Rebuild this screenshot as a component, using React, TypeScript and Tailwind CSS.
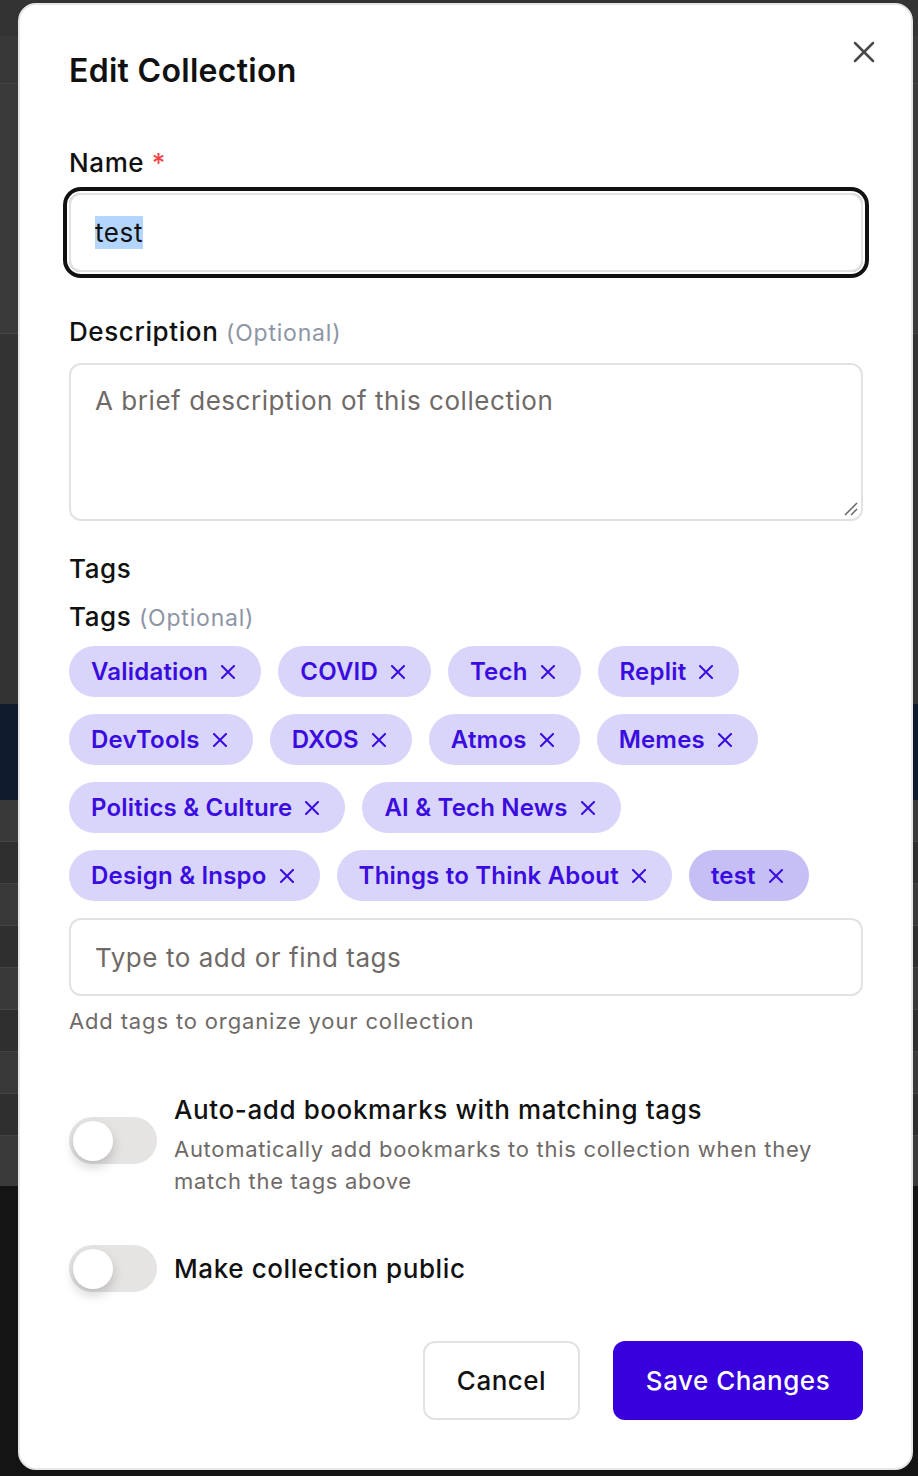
import { X } from 'lucide-react';

const tags = [
  'Validation',
  'COVID',
  'Tech',
  'Replit',
  'DevTools',
  'DXOS',
  'Atmos',
  'Memes',
  'Politics & Culture',
  'AI & Tech News',
  'Design & Inspo',
  'Things to Think About',
  'test',
];

function ChipX() {
  return (
    <svg width="14" height="14" viewBox="0 0 14 14" className="shrink-0">
      <path d="M1 1L13 13M13 1L1 13" stroke="currentColor" strokeWidth="2" strokeLinecap="square" />
    </svg>
  );
}

function Toggle() {
  return (
    <div className="w-[88px] h-[47px] rounded-full bg-[#e6e3e3] flex items-center px-[4px] shrink-0">
      <div className="w-[40px] h-[40px] rounded-full bg-white shadow-[0_6px_12px_rgba(0,0,0,0.18)]" />
    </div>
  );
}

export default function App() {
  return (
    <div className="relative w-[918px] h-[1476px] overflow-hidden bg-[#2c2c2c]" style={{ fontFamily: 'Inter, "Noto Sans", sans-serif' }}>
      {/* page behind the dialog */}
      <div className="flex flex-col h-full">
        <div className="h-[36px] bg-[#333]" />
        <div className="h-[48px] bg-[#383838] border-b border-[#444]" />
        <div className="h-[250px] bg-[#3a3a3a] border-b border-[#444]" />
        <div className="h-[370px] bg-[#333]" />
        <div className="h-[96px] bg-[#0f1b2c]" />
        {[0, 1, 2, 3, 4, 5, 6, 7].map((i) => (
          <div key={i} className={`h-[42px] border-b border-[#444] ${i % 2 ? 'bg-[#2f2f2f]' : 'bg-[#393939]'}`} />
        ))}
        <div className="h-[50px] bg-[#3a3a3a]" />
        <div className="flex-1 bg-[#141414]" />
      </div>

      {/* dialog */}
      <div className="absolute inset-0 pl-[18px] pr-[5px] pt-[3px] pb-[6px] flex">
        <div className="relative flex-1 bg-white rounded-[18px] border-2 border-[#e7e5e5] pl-[49px] pr-[48px] pt-[46px] pb-[48px] flex flex-col text-[#111]">
          <button className="absolute top-[29px] right-[29px] text-[#4a4a4a]">
            <X size={36} strokeWidth={1.7} />
          </button>

          <h1 className="text-[32px] leading-[40px] font-semibold tracking-[0.3px]">Edit Collection</h1>

          <label className="mt-[54px] text-[26px] leading-[36px] font-medium tracking-[0.6px]">
            Name <span className="text-[#ef4444]">*</span>
          </label>
          <div className="mt-[12px] h-[79px] rounded-[12px] border-2 border-[#e5e1e1] ring-4 ring-[#111] ring-offset-2 flex items-center pl-[24px]">
            <span className="text-[26px] leading-[33px] tracking-[0.6px] bg-[#b4d5fe]">test</span>
          </div>

          <label className="mt-[42px] text-[26px] leading-[36px] font-medium tracking-[0.6px]">
            Description <span className="text-[23px] font-normal text-[#8d95a5] tracking-[0.8px]">(Optional)</span>
          </label>
          <div className="relative mt-[12px] h-[158px] rounded-[12px] border-2 border-[#e5e1e1] pl-[24px] pt-[18px]">
            <span className="text-[26px] leading-[36px] text-[#6f6a68] tracking-[0.55px]">A brief description of this collection</span>
            <svg width="14" height="14" viewBox="0 0 14 14" className="absolute right-[3px] bottom-[3px] text-[#666]">
              <path d="M1 13L13 1M7 13L13 7" stroke="currentColor" strokeWidth="1.5" />
            </svg>
          </div>

          <div className="mt-[30px] text-[26px] leading-[36px] font-medium tracking-[0.6px]">Tags</div>
          <label className="mt-[12px] text-[26px] leading-[36px] font-medium tracking-[0.6px]">
            Tags <span className="text-[23px] font-normal text-[#8d95a5] tracking-[0.8px]">(Optional)</span>
          </label>

          <div className="mt-[10px] flex flex-wrap gap-[17px] w-[780px]">
            {tags.map((t) => (
              <div
                key={t}
                className={`h-[51px] rounded-full flex items-center gap-[13px] pl-[22px] pr-[26px] text-[24px] font-semibold tracking-[0.2px] text-[#3a0ce0] ${
                  t === 'test' ? 'bg-[#c5bff6]' : 'bg-[#d9d5fa]'
                }`}
              >
                <span>{t}</span>
                <ChipX />
              </div>
            ))}
          </div>

          <div className="mt-[17px] h-[78px] rounded-[12px] border-2 border-[#e5e1e1] flex items-center pl-[24px]">
            <span className="text-[26px] text-[#6f6a68] tracking-[0.55px]">Type to add or find tags</span>
          </div>
          <p className="mt-[10px] text-[22px] leading-[30px] text-[#6f6a68] tracking-[0.85px]">Add tags to organize your collection</p>

          <div className="mt-[56px] flex items-start gap-[17px]">
            <div className="mt-[25px]">
              <Toggle />
            </div>
            <div>
              <div className="text-[26px] leading-[36px] font-medium tracking-[0.6px]">Auto-add bookmarks with matching tags</div>
              <p className="mt-[5px] text-[22px] leading-[32px] text-[#6f6a68] tracking-[0.7px]">
                Automatically add bookmarks to this collection when they match the tags above
              </p>
            </div>
          </div>

          <div className="mt-[48px] flex items-center gap-[17px]">
            <Toggle />
            <span className="text-[26px] leading-[36px] font-medium tracking-[0.6px]">Make collection public</span>
          </div>

          <div className="mt-auto flex justify-end gap-[33px]">
            <button className="w-[157px] h-[79px] rounded-[12px] border-2 border-[#e5e1e1] bg-white text-[26px] font-medium tracking-[0.5px] text-[#111]">
              Cancel
            </button>
            <button className="w-[250px] h-[79px] rounded-[12px] bg-[#3800dc] text-[26px] font-medium tracking-[0.5px] text-white">
              Save Changes
            </button>
          </div>
        </div>
      </div>
    </div>
  );
}
